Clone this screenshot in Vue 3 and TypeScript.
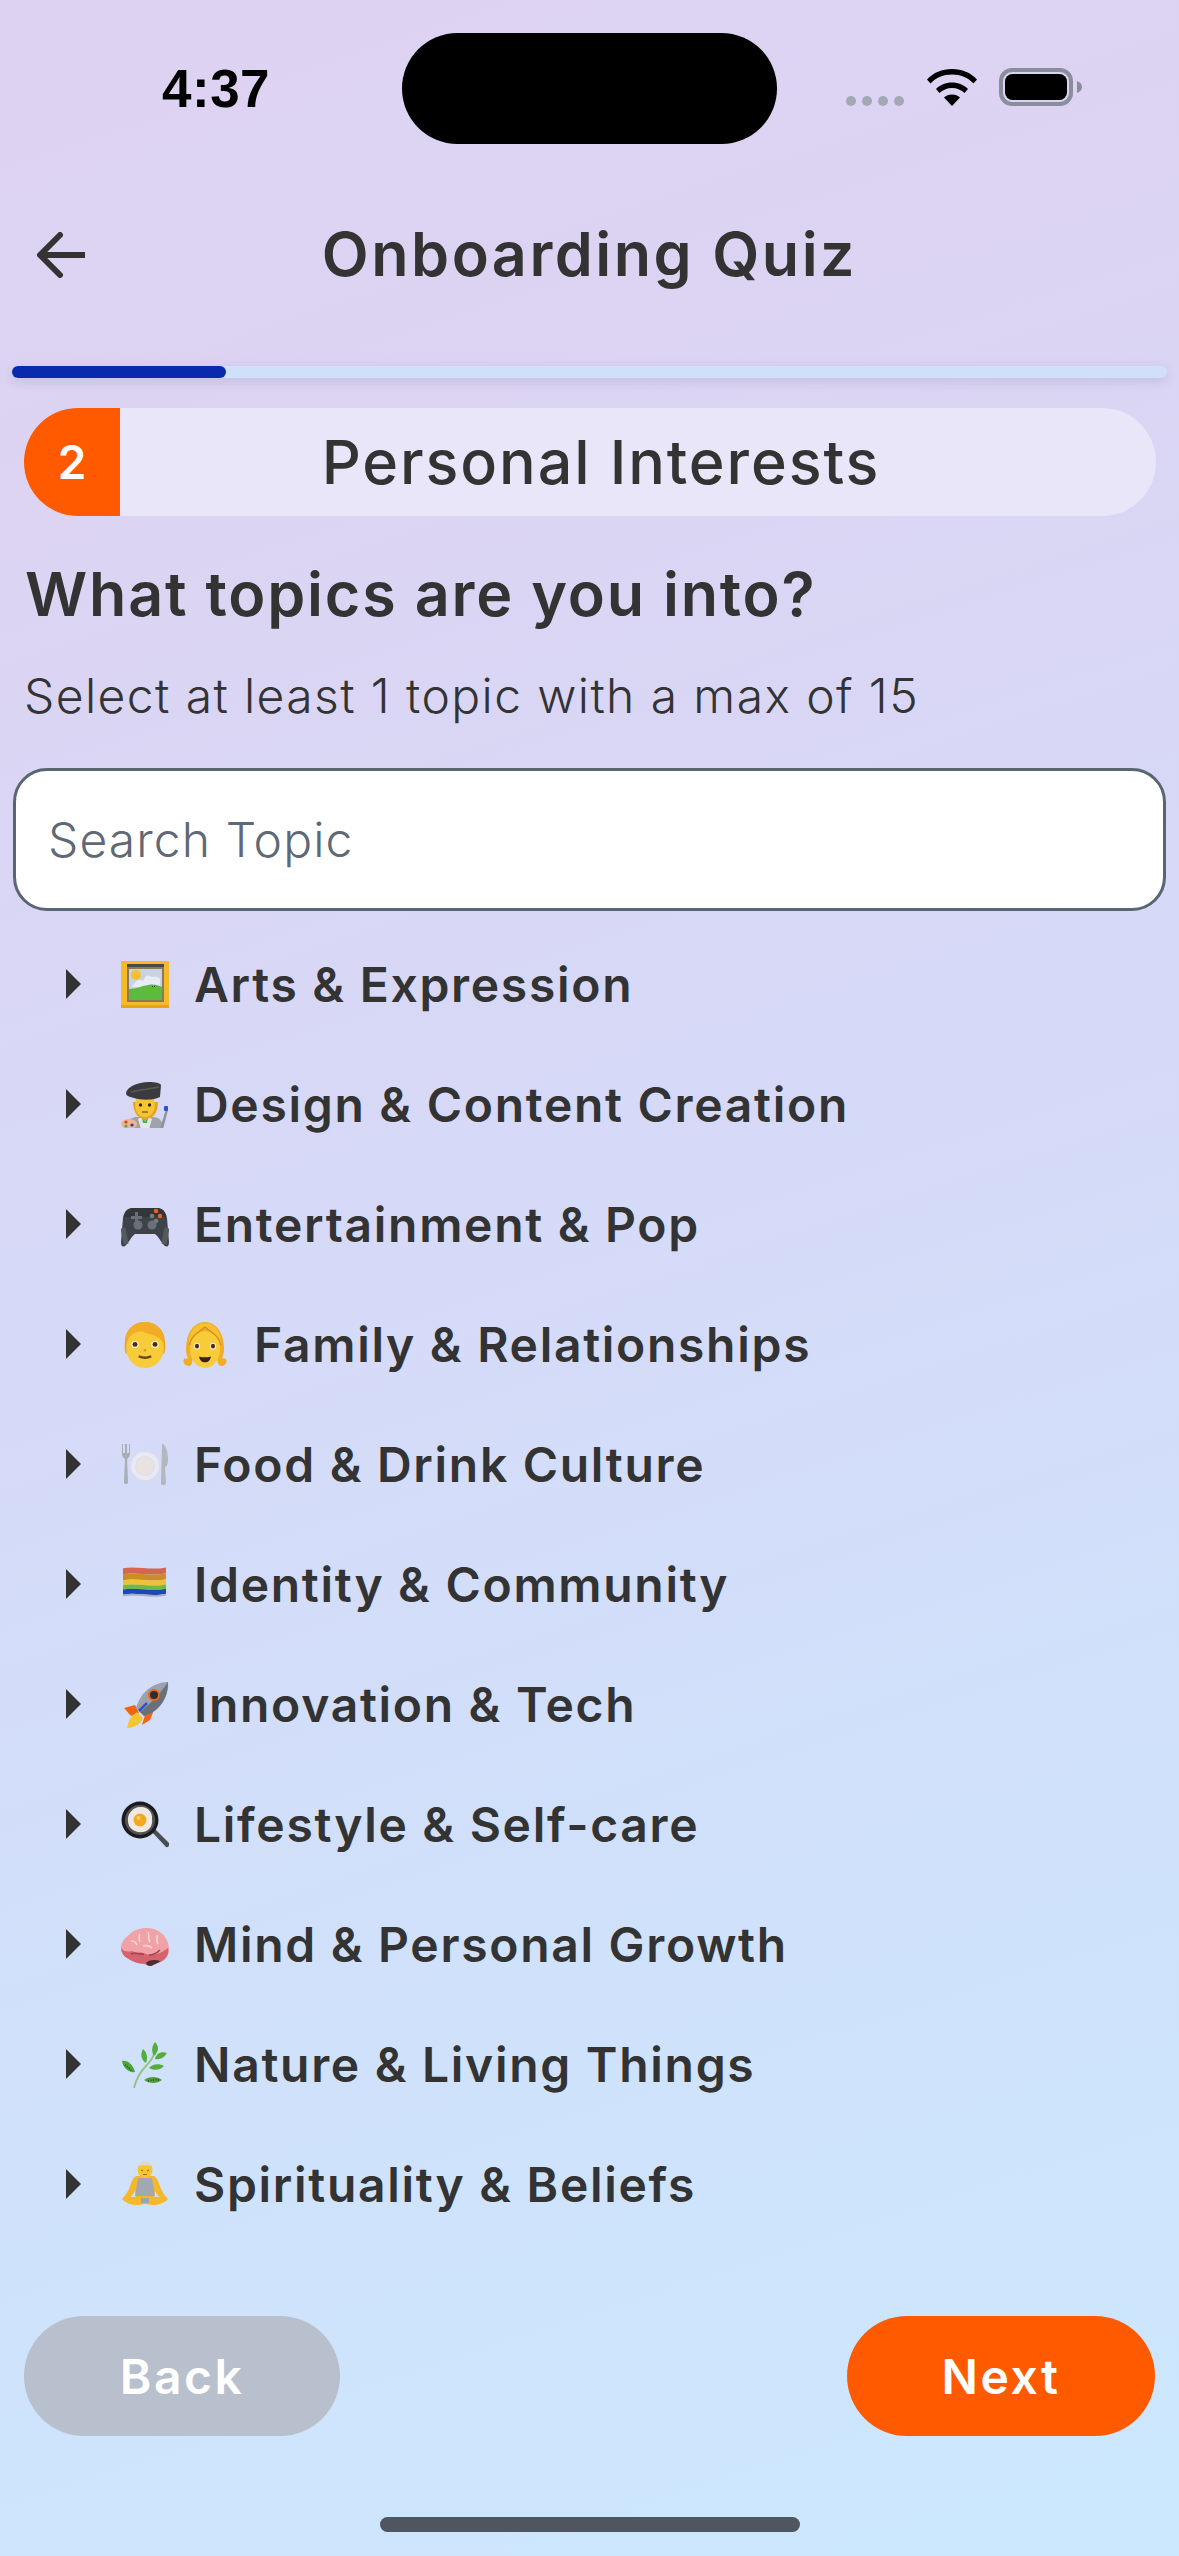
<script setup lang="ts">
interface Topic { label: string; icons: string[] }

const art: Record<string, string> = {
  frame: `<rect x="0" y="0" width="48" height="47" fill="#f6b92c"/><rect x="0" y="44" width="48" height="3" fill="#e8a21e"/><rect x="6" y="3" width="37" height="3" fill="#4a4a4a"/><rect x="6" y="6" width="37" height="35" fill="#8a7a55"/><rect x="8" y="8" width="33" height="31" fill="#c9d2e2"/><circle cx="15" cy="14" r="5" fill="#f5c02c"/><path d="M14 22c3-5 6-3 8-2 2-5 5-7 8-4 3-1 7-1 9 2v8H10z" fill="#e8ecf4"/><path d="M8 28c7 0 12-3 19-4 6-1 10 0 14 2v13H8z" fill="#5cbb3f"/><rect x="31" y="25" width="1" height="1" fill="#333"/><rect x="33" y="25" width="1" height="1" fill="#333"/>`,
  artist: `<path d="M5 48c0-8 4-11 10-12h18c6 1 9 4 9 12z" fill="#9fa4aa"/><path d="M20 36l4 4 4-4 3 2-3 10h-8l-3-10z" fill="#e6e6e6"/><path d="M21 37l3 3 3-3-1 5h-4z" fill="#4fb04a"/><ellipse cx="8" cy="43" rx="8" ry="5" fill="#f2b48c"/><circle cx="5" cy="41" r="1.6" fill="#d8402c"/><circle cx="5" cy="45" r="1.6" fill="#4fb04a"/><circle cx="11" cy="44" r="1.6" fill="#1f3fb5"/><path d="M39 48l6-20 2 1-5 19z" fill="#8d9299"/><rect x="43" y="25" width="4" height="5" rx="1" fill="#2b54c8"/><path d="M12 21c0 9 4 17 12 17s13-6 13-17z" fill="#e8a322"/><ellipse cx="24" cy="24" rx="10" ry="12" fill="#f7c531"/><path d="M5 12C6 6 16 1 28 1c7 0 11 1 12 3l-1 12c-8 4-20 3-26 1C9 16 5 15 5 12z" fill="#3b3b3e"/><path d="M10 11c8-2 18-3 28-5" stroke="#5b5b5e" stroke-width="1.5" fill="none"/><circle cx="19.500" cy="24" r="1.700" fill="#3a2a1a"/><circle cx="28.500" cy="24" r="1.700" fill="#3a2a1a"/><path d="M21 31h6" stroke="#8b5a1c" stroke-width="1.400"/>`,
  pad: `<path d="M12 4h24c6 0 9 4 10 10l2 24c0 5-2 5-4 4-3-2-6-9-10-12H14c-4 3-7 10-10 12-2 1-4 1-4-4l2-24C3 8 6 4 12 4z" fill="#3f4349"/><path d="M11 4h26c5 1 7 4 8 9H3c1-5 3-8 8-9z" fill="#33363b"/><path d="M14 11h4v-4h3v4h4v3h-4v4h-3v-4h-4z" transform="translate(-4 1)" fill="#6a7078"/><circle cx="35" cy="7" r="2.200" fill="#f2640f"/><circle cx="39" cy="12" r="2.200" fill="#f2640f"/><circle cx="31" cy="12" r="2.200" fill="#777d85"/><circle cx="35" cy="17" r="2.200" fill="#777d85"/><circle cx="17" cy="21" r="4.500" fill="#6a7078"/><circle cx="31" cy="21" r="4.500" fill="#6a7078"/><path d="M2 24l3 16M46 24l-3 16" stroke="#555a61" stroke-width="5"/>`,
  boy: `<path d="M4 17C4 6 12 0 20 0s16 6 16 17c0 0 1 8-1 10H5C3 25 4 17 4 17z" fill="#e9a622"/><ellipse cx="20" cy="22" rx="15" ry="17" fill="#f8cb39"/><path d="M5 18C7 9 14 8 18 8c5 3 12 2 17 10 1-11-6-18-15-18S3 7 5 18z" fill="#f2ad26"/><circle cx="12" cy="19" r="3" fill="#fff2d0"/><circle cx="28" cy="19" r="3" fill="#fff2d0"/><circle cx="12" cy="19" r="2" fill="#4a2a1a"/><circle cx="28" cy="19" r="2" fill="#4a2a1a"/><path d="M15 29c3 1.500 7 1.500 10 0" stroke="#6b4410" stroke-width="2" fill="none"/><path d="M19 24h2" stroke="#d99a20" stroke-width="2"/>`,
  girl: `<path d="M2 32c-2 4 2 7 6 6 2-1 3-4 2-7zM44 32c2 4-2 7-6 6-2-1-3-4-2-7z" fill="#f2ad26"/><path d="M4 24C4 8 13 0 23 0s19 8 19 24c0 4-2 8-3 9H7c-1-1-3-5-3-9z" fill="#f2ad26"/><ellipse cx="23" cy="24" rx="15" ry="16" fill="#f8cb39"/><path d="M7 20C9 11 18 9 23 4c5 5 14 7 16 16C40 8 32 1 23 1S6 8 7 20z" fill="#f7c02f"/><path d="M23 4C18 9 9 11 7 20M23 4c5 5 14 7 16 16" stroke="#c98c1c" stroke-width="1" fill="none"/><circle cx="15" cy="21" r="3" fill="#fff2d0"/><circle cx="31" cy="21" r="3" fill="#fff2d0"/><circle cx="15" cy="21" r="2" fill="#4a2a1a"/><circle cx="31" cy="21" r="2" fill="#4a2a1a"/><path d="M17 30c4 1 8 1 12 0-1 4-3 5-6 5s-5-1-6-5z" fill="#3a2210"/>`,
  plate: `<circle cx="24" cy="23" r="15.500" fill="#d9dcec"/><circle cx="24" cy="23" r="14" fill="#ebe8f5"/><circle cx="24" cy="23" r="10" fill="#dedfe6"/><circle cx="24" cy="23" r="8.500" fill="#e8e3df"/><path d="M1 1v10c0 3 2 4 3 5l-1 23c0 3 4 3 4 0L6 16c1-1 3-2 3-5V1H8v9H6V1H4v9H2V1z" fill="#a9adb5"/><path d="M42 1c3 2 5 8 5 15s-2 8-3 8l1 16c0 3-5 3-5 0l1-38c0-1 0-1 1-1z" fill="#b3b8bf"/>`,
  flag: `<path d="M0 5c14-3 28 3 43-1v7C28 15 14 9 0 12z" fill="#d8654f"/><path d="M0 12c14-3 28 3 43-1v7C28 22 14 16 0 19z" fill="#c98f24"/><path d="M0 19c14-3 28 3 43-1v6C28 28 14 22 0 25z" fill="#eec138"/><path d="M0 25c14-3 28 3 43-1v5C28 33 14 27 0 30z" fill="#6dbb45"/><path d="M0 30c14-3 28 3 43-1v6C28 39 14 33 0 36z" fill="#1f47b8"/><path d="M0 36c14-3 28 3 43-1v2C28 41 14 35 0 38z" fill="#a4acc2"/>`,
  rocket: `<path d="M14 24L3 27l7 8 8-3zM24 34l-3 10 8-5 4-10z" fill="#f2640f"/><path d="M12 34c-4 4-5 9-6 13 5 0 9-2 13-5l3-5-6-6z" fill="#f7c531"/><path d="M47 1c-9 0-18 4-25 12-3 4-5 8-7 14l8 8c6-2 11-5 14-8 7-7 11-16 10-26z" fill="#9ca2ac"/><path d="M47 1c0 10-3 19-10 26-3 3-8 6-14 8l-4-4C28 24 40 12 47 1z" fill="#6a7078"/><circle cx="33" cy="14" r="6" fill="#f2640f"/><circle cx="33" cy="14" r="4" fill="#23303f"/><path d="M18 30l8-8" stroke="#2b54c8" stroke-width="2.500"/>`,
  pan: `<path d="M30 30l3-3 15 15c1 2-1 5-3 4z" fill="#4a4d52"/><circle cx="19" cy="19" r="18.500" fill="#1b1b1d"/><circle cx="19" cy="19" r="15" fill="#555"/><path d="M19 6c7-1 13 5 12 12 1 7-3 12-9 13-7 1-15-3-15-11C6 13 12 6 19 6z" fill="#efe9e5"/><circle cx="19" cy="19" r="6.500" fill="#f5a71d"/><circle cx="17.500" cy="17" r="2" fill="#fbd35a"/>`,
  brain: `<path d="M9 8c5-6 21-9 30-2 6 4 9 11 9 18 0 8-6 12-12 13-3 3-9 4-12 1-6 0-14-3-18-6C2 30 0 25 0 22 0 16 4 12 9 8z" fill="#f1a2a7"/><path d="M0 22c3 4 7 4 11 3 5 3 9 0 14 3 7 3 15-1 22-6 2 8-5 14-11 15-3 3-9 4-12 1-6 0-14-3-18-6C2 30 0 25 0 22z" fill="#d3646e"/><path d="M25 37c2-3 9-4 14-2-2 3-5 2-7 4-2 2-6 1-7-2z" fill="#4a2e35"/><path d="M18 8c2 3-2 5 1 8M27 6c2 4-1 6 2 10M36 9c1 4-2 5 1 9M10 15c3 0 5 1 6 4M22 20c4-1 7 0 9 2" stroke="#fbd5d6" stroke-width="1.600" fill="none"/><path d="M10 28c5-2 9 1 13 0M28 29c4 0 8-2 11-5" stroke="#a8404e" stroke-width="1.500" fill="none"/>`,
  herb: `<path d="M13 46c2-8 6-16 12-22 4-4 7-8 9-14" stroke="#8fc27a" stroke-width="1.800" fill="none"/><path d="M34 0c3 3 4 7 2 10-1 2-2 3-3 4-3-5-2-10 1-14z" fill="#53ad3a"/><path d="M46 11c-3 5-7 7-12 6 1-5 6-8 12-6z" fill="#53ad3a"/><path d="M22 7c4 3 5 9 3 14-5-3-6-9-3-14z" fill="#53ad3a"/><path d="M43 24c-3 4-10 5-15 2 3-4 10-5 15-2z" fill="#53ad3a"/><path d="M1 19c6-1 11 4 13 11-6 1-12-4-13-11z" fill="#4aa637"/><path d="M41 38c-5 4-13 4-18 0 5-4 13-4 18 0z" fill="#4f9e3a"/><path d="M27 39c4-1 8-2 11-1" stroke="#2f5a2a" stroke-width="2" stroke-dasharray="1 1.500" fill="none"/><path d="M4 23c2 1 5 4 7 6" stroke="#2f5a2a" stroke-width="2" stroke-dasharray="1 1.500" fill="none"/>`,
  yoga: `<path d="M15 14c-4 2-5 8-7 13-2 4-5 8-7 10l3 3c4-3 8-7 10-11l1 7h18l1-7c2 4 6 8 10 11l3-3c-2-2-5-6-7-10-2-5-3-11-7-13z" fill="#f4b82a"/><path d="M17 16h14l3 18H14z" fill="#a2a8b2"/><path d="M3 38c4-3 9-4 14-3 3 1 5 2 7 2s4-1 7-2c5-1 10 0 14 3-2 3-8 5-13 5-3 0-6-1-8-1s-5 1-8 1c-5 0-11-2-13-5z" fill="#f4b82a"/><rect x="20" y="36" width="8" height="5" fill="#9ea4ae"/><ellipse cx="24" cy="8" rx="7.500" ry="8" fill="#f7c531"/><path d="M17 4c2-3 5-4 7-4s5 1 7 4c-4-1-10-1-14 0z" fill="#d9d9d6"/><path d="M20 8l2 1M26 9l2-1M22 12.500h4" stroke="#a06a10" stroke-width="1.200"/>`
}

/* Where each drawing sits inside its 48×48 emoji cell. */
const placement: Record<string, string> = {
  frame: 'translate(0 1)',
  artist: 'translate(0 1)',
  pad: 'translate(0 4)',
  boy: 'translate(-1 2) scale(1.25 1.18)',
  girl: 'translate(1 2) scale(1 1.15)',
  plate: 'translate(0 3)',
  flag: 'translate(2 4) scale(1 0.85)',
  rocket: 'translate(0 1)',
  pan: 'translate(0 1)',
  brain: 'translate(0 6)',
  herb: 'translate(0 2)',
  yoga: 'translate(0 2)'
}

function glyph(name: string): string {
  return `<g transform="${placement[name]}">${art[name]}</g>`
}

const topics: Topic[] = [
  { label: 'Arts & Expression', icons: ['frame'] },
  { label: 'Design & Content Creation', icons: ['artist'] },
  { label: 'Entertainment & Pop', icons: ['pad'] },
  { label: 'Family & Relationships', icons: ['boy', 'girl'] },
  { label: 'Food & Drink Culture', icons: ['plate'] },
  { label: 'Identity & Community', icons: ['flag'] },
  { label: 'Innovation & Tech', icons: ['rocket'] },
  { label: 'Lifestyle & Self-care', icons: ['pan'] },
  { label: 'Mind & Personal Growth', icons: ['brain'] },
  { label: 'Nature & Living Things', icons: ['herb'] },
  { label: 'Spirituality & Beliefs', icons: ['yoga'] }
]
</script>

<template>
  <div class="screen">
    <div class="status">
      <div class="time">4:37</div>
      <div class="island"></div>
      <div class="indicators">
        <div class="dots"><i></i><i></i><i></i><i></i></div>
        <svg class="wifi" width="50" height="38" viewBox="0 0 50 38">
          <path d="M0 11.500C6.500 4.500 15 1 25 1s18.500 3.500 25 10.500l-3.500 4C41 9.500 33.500 6.500 25 6.500S9 9.500 3.500 15.500z" />
          <path d="M9 21c4-4 9.500-6.500 16-6.500S37 17 41 21l-3.500 4c-3-3-7.500-5-12.500-5s-9.500 2-12.500 5z" />
          <path d="M17 29.500c2-2 5-3 8-3s6 1 8 3L25 38z" />
        </svg>
        <svg class="battery" width="83" height="38" viewBox="0 0 83 38">
          <rect x="2" y="2" width="70" height="34" rx="11" fill="none" stroke="#8a8d9c" stroke-width="4" />
          <rect x="6" y="6" width="62" height="26" rx="7.500" fill="#000" />
          <path d="M78 13c3 1 5 3 5 6s-2 5-5 6z" fill="#8a8d9c" />
        </svg>
      </div>
    </div>

    <header class="bar">
      <svg class="back-arrow" width="48" height="46" viewBox="0 0 48 46">
        <path d="M47 23H4M23 3L3 23l20 20" fill="none" stroke="#333" stroke-width="6" stroke-linecap="round" stroke-linejoin="round" />
      </svg>
      <h1 class="title">Onboarding Quiz</h1>
    </header>

    <div class="progress"><div class="progress-fill"></div></div>

    <div class="section-pill">
      <div class="section-num">2</div>
      <div class="section-name">Personal Interests</div>
    </div>

    <h2 class="question">What topics are you into?</h2>
    <p class="hint">Select at least 1 topic with a max of 15</p>

    <div class="search"><span class="placeholder">Search Topic</span></div>

    <ul class="topics">
      <li v-for="t in topics" :key="t.label" class="topic">
        <span class="caret"></span>
        <span class="emojis">
          <svg
            v-for="ic in t.icons"
            :key="ic"
            class="emoji"
            width="48"
            height="48"
            viewBox="0 0 48 48"
            v-html="glyph(ic)"
          ></svg>
        </span>
        <span class="topic-label">{{ t.label }}</span>
      </li>
    </ul>

    <footer class="actions">
      <button class="btn btn-back">Back</button>
      <button class="btn btn-next">Next</button>
    </footer>

    <div class="home-wrap"><div class="home"></div></div>
  </div>
</template>

<style>
html, body { margin: 0; padding: 0; }
</style>

<style scoped>
.screen {
  width: 1179px;
  height: 2556px;
  display: flex;
  flex-direction: column;
  overflow: hidden;
  background: linear-gradient(162deg, #ded2f2 0%, #dcd4f3 20%, #d6d9f7 44%, #d1e0fa 68%, #cbe8fe 100%);
  font-family: Inter, "Open Sans", sans-serif;
  color: #333;
}
.status {
  height: 111px;
  margin-top: 33px;
  display: flex;
  align-items: stretch;
  flex: none;
}
.time {
  width: 402px;
  padding-left: 162px;
  box-sizing: border-box;
  font-family: "Liberation Sans", sans-serif;
  font-weight: 700;
  font-size: 53px;
  line-height: 111px;
  letter-spacing: 0.5px;
  color: #000;
}
.island {
  width: 375px;
  height: 111px;
  border-radius: 56px;
  background: #000;
}
.indicators {
  position: relative;
  flex: 1;
  display: flex;
  align-items: flex-start;
  padding-top: 35px;
  padding-left: 69px;
}
.dots {
  display: flex;
  gap: 6px;
  margin-top: 28px;
  margin-right: 23px;
}
.dots i {
  width: 10px;
  height: 10px;
  border-radius: 50%;
  background: #a4a8b4;
}
.wifi { fill: #000; margin-right: 22px; }
.bar {
  flex: none;
  height: 120px;
  margin-top: 50px;
  display: flex;
  align-items: center;
  justify-content: center;
  position: relative;
}
.back-arrow { position: absolute; left: 37px; top: 38px; }
.title {
  margin: 0;
  font-size: 61px;
  font-weight: 600;
  letter-spacing: 2.5px;
}
.progress {
  flex: none;
  height: 12px;
  margin: 52px 12px 0;
  border-radius: 6px;
  background: #d0e0fa;
  box-shadow: 0 3px 12px rgba(60, 60, 110, 0.16);
}
.progress-fill {
  width: 214px;
  height: 100%;
  border-radius: 6px;
  background: #0a2aae;
}
.section-pill {
  flex: none;
  height: 108px;
  margin: 30px 23px 0 24px;
  display: flex;
  border-radius: 54px;
  overflow: hidden;
  background: #e8e6f8;
}
.section-num {
  width: 96px;
  background: #ff5a00;
  color: #fff;
  font-size: 46px;
  font-weight: 600;
  line-height: 108px;
  text-align: center;
}
.section-name {
  flex: 1;
  padding-right: 74px;
  font-size: 61px;
  font-weight: 500;
  letter-spacing: 1.9px;
  line-height: 108px;
  text-align: center;
}
.question {
  margin: 43px 0 0 25px;
  font-size: 61px;
  font-weight: 600;
  letter-spacing: 1.8px;
  line-height: 70px;
}
.hint {
  margin: 39px 0 0 24px;
  font-size: 48px;
  font-weight: 300;
  letter-spacing: 1.4px;
  line-height: 56px;
}
.search {
  flex: none;
  height: 143px;
  box-sizing: border-box;
  margin: 44px 13px 0;
  padding-left: 32px;
  display: flex;
  align-items: center;
  background: #fff;
  border: 3px solid #5a6573;
  border-radius: 34px;
}
.placeholder {
  font-size: 48px;
  font-weight: 300;
  letter-spacing: 1.1px;
  color: #5f6875;
}
.topics {
  list-style: none;
  margin: 13px 0 0;
  padding: 0;
}
.topic {
  height: 120px;
  display: flex;
  align-items: center;
  padding-left: 66px;
}
.caret {
  width: 0;
  height: 0;
  border-style: solid;
  border-width: 15px 0 15px 15px;
  border-color: transparent transparent transparent #333;
  margin-right: 40px;
}
.emojis {
  display: flex;
  gap: 12px;
  margin-right: 25px;
}
.emoji { display: block; }
.topic-label {
  font-size: 48px;
  font-weight: 600;
  letter-spacing: 1.7px;
}
.actions {
  flex: none;
  margin: 72px 24px 0;
  display: flex;
  justify-content: space-between;
}
.btn {
  height: 120px;
  border: 0;
  border-radius: 60px;
  color: #fff;
  font-family: inherit;
  font-size: 48px;
  font-weight: 600;
  letter-spacing: 2.5px;
  padding: 0;
}
.btn-back { width: 316px; background: #b7c0cc; }
.btn-next { width: 308px; background: #ff5a00; }
.home-wrap {
  flex: none;
  margin-top: 81px;
  display: flex;
  justify-content: center;
}
.home {
  width: 420px;
  height: 15px;
  border-radius: 8px;
  background: #50565f;
}
</style>
